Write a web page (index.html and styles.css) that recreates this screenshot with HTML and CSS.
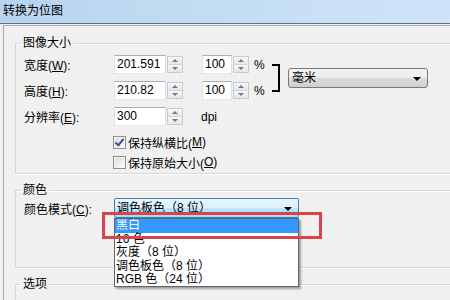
FILE: index.html
```html
<!DOCTYPE html>
<html lang="zh-CN">
<head>
  <meta charset="UTF-8" />
  <title>转换为位图</title>
  <link rel="stylesheet" href="styles.css">
</head>
<body>
  <div class="titlebar">转换为位图</div>

  <div class="panel">
    <fieldset class="group">
      <legend>图像大小</legend>
      <div class="size-grid">
        <div class="label">宽度(<u>W</u>):</div>
        <div class="spin-field">
          <div class="num">201.591</div>
          <div class="spin"><span class="up"></span><span class="down"></span></div>
        </div>
        <div class="spin-field">
          <div class="num pct">100</div>
          <div class="spin"><span class="up"></span><span class="down"></span></div>
        </div>
        <div class="unit">%</div>
        <div class="bracket"></div>
        <div class="select unit-select">毫米<span class="arrow"></span></div>

        <div class="label">高度(<u>H</u>):</div>
        <div class="spin-field">
          <div class="num">210.82</div>
          <div class="spin"><span class="up"></span><span class="down"></span></div>
        </div>
        <div class="spin-field">
          <div class="num pct">100</div>
          <div class="spin"><span class="up"></span><span class="down"></span></div>
        </div>
        <div class="unit">%</div>

        <div class="label">分辨率(<u>E</u>):</div>
        <div class="spin-field">
          <div class="num">300</div>
          <div class="spin"><span class="up"></span><span class="down"></span></div>
        </div>
        <div class="unit dpi">dpi</div>
      </div>

      <div class="checks">
        <div class="check-row"><span class="checkbox checked"></span>保持纵横比(<u>M</u>)</div>
        <div class="check-row"><span class="checkbox"></span>保持原始大小(<u>O</u>)</div>
      </div>
    </fieldset>

    <fieldset class="group color-group">
      <legend>颜色</legend>
      <div class="color-row">
        <div class="label">颜色模式(<u>C</u>):</div>
        <div class="combo">
          <div class="select color-select">调色板色（8 位）<span class="arrow"></span></div>
          <ul class="dropdown">
            <li class="selected">黑白</li>
            <li>16 色</li>
            <li>灰度（8 位）</li>
            <li>调色板色（8 位）</li>
            <li>RGB 色（24 位）</li>
          </ul>
        </div>
      </div>
    </fieldset>

    <fieldset class="group">
      <legend>选项</legend>
      <div class="check-row option-row"><span class="checkbox"></span>光滑处理(<u>A</u>)</div>
    </fieldset>
  </div>

  <div class="highlight"></div>
</body>
</html>
```

FILE: styles.css
```css
body {
  margin: 0;
  width: 450px;
  height: 300px;
  overflow: hidden;
  position: relative;
  background: #f0f0f0;
  color: #000;
  font-family: "Liberation Sans", "Noto Sans CJK SC", sans-serif;
  font-size: 12px;
}
u {
  text-decoration: underline;
  text-underline-offset: 1px;
}
.titlebar {
  height: 23px;
  line-height: 22px;
  padding-left: 3px;
  border-bottom: 1px solid #5f7287;
  background: linear-gradient(90deg, #b7d3ee 0%, #c3dcf3 45%, #cfe4f8 100%);
  font-size: 12px;
}
.panel {
  margin: 1px 0 0 3px;
  width: 520px;
  height: 300px;
  border-top: 1px solid #a9abad;
  border-left: 1px solid #a9abad;
  background: #f0f0f0;
}
.group {
  margin: 8px 0 0 11px;
  padding: 4px 0 1px 8px;
  border: 1px solid #d5d9dc;
  border-right: none;
  box-shadow: 0 1px 0 #fff, inset 0 1px 0 #fff;
  min-width: 0;
}
.group:first-child {
  margin-top: 9px;
}
.group legend {
  margin-left: -3px;
  padding: 0 2px;
  line-height: 16px;
}
.size-grid {
  display: grid;
  grid-template-columns: 90px 88px 51px 19px 16px 140px;
  grid-template-rows: 19px 19px 19px;
  row-gap: 7px;
  align-items: center;
}
.label {
  white-space: nowrap;
}
.spin-field {
  display: flex;
  align-items: center;
}
.num {
  box-sizing: border-box;
  width: 52px;
  height: 19px;
  padding-left: 2px;
  line-height: 17px;
  background: #fff;
  border: 1px solid #abadb3;
  border-color: #abadb3 #dbdfe6 #e3e9ef #e2e3ea;
}
.num.pct {
  width: 30px;
}
.spin {
  box-sizing: border-box;
  width: 16px;
  height: 17px;
  margin-left: 1px;
  border: 1px solid #c9cbce;
  display: flex;
  flex-direction: column;
}
.spin span {
  flex: 1;
  display: flex;
  align-items: center;
  justify-content: center;
  background: linear-gradient(#f8f8f8, #e6e6e6);
}
.spin .up {
  border-bottom: 1px solid #d6d6d6;
}
.spin span::after {
  content: "";
  border-left: 3px solid transparent;
  border-right: 3px solid transparent;
}
.spin .up::after {
  border-bottom: 3px solid #6f7c93;
}
.spin .down::after {
  border-top: 3px solid #6f7c93;
}
.unit {
  padding-left: 1px;
}
.dpi {
  margin-left: -2px;
}
.bracket {
  grid-column: 5;
  grid-row: 1 / span 2;
  box-sizing: border-box;
  width: 8px;
  height: 28px;
  border: 2px solid #000;
  border-left: none;
}
.select {
  position: relative;
  box-sizing: border-box;
  height: 20px;
  line-height: 18px;
  padding-left: 3px;
  border-radius: 3px;
}
.unit-select {
  grid-column: 6;
  grid-row: 1 / span 2;
  width: 140px;
  border: 1px solid #7a7a7a;
  background: linear-gradient(#f3f3f3 0%, #ebebeb 50%, #dddddd 50%, #d0d0d0 100%);
}
.arrow {
  position: absolute;
  right: 6px;
  top: 8px;
  border-left: 4px solid transparent;
  border-right: 4px solid transparent;
  border-top: 4px solid #000;
}
.checks {
  margin-top: 6px;
  padding-left: 89px;
}
.check-row {
  display: flex;
  align-items: center;
  height: 20px;
  white-space: nowrap;
}
.checkbox {
  position: relative;
  box-sizing: border-box;
  width: 13px;
  height: 13px;
  margin-right: 2px;
  border: 1px solid #8e8f8f;
  background: linear-gradient(135deg, #dcdcdc, #fbfbfb);
  box-shadow: inset 0 0 0 1px #f4f4f4;
}
.checkbox.checked::after {
  content: "";
  position: absolute;
  left: 3px;
  top: 0;
  width: 3px;
  height: 7px;
  border: solid #3d5192;
  border-width: 0 2px 2px 0;
  transform: rotate(40deg);
}
.color-group {
  padding-top: 0;
  padding-bottom: 49px;
}
.color-row {
  display: flex;
  align-items: center;
}
.color-row .label {
  width: 90px;
}
.combo {
  position: relative;
}
.color-select {
  width: 185px;
  padding-left: 2px;
  border: 1px solid #3c7fb1;
  border-radius: 2px;
  background: linear-gradient(#eaf6fd 0%, #d9f0fc 50%, #bee6fd 50%, #a7d9f5 100%);
}
.dropdown {
  position: absolute;
  left: 0;
  top: 20px;
  box-sizing: border-box;
  width: 185px;
  height: 69px;
  margin: 0;
  padding: 0;
  list-style: none;
  background: #fff;
  border: 1px solid #646464;
  box-shadow: 2px 2px 2px rgba(0, 0, 0, 0.35);
  overflow: hidden;
}
.dropdown li {
  height: 13.5px;
  line-height: 13.5px;
  padding-left: 1px;
  white-space: nowrap;
}
.dropdown li.selected {
  background: #3399ff;
  color: #fff;
}
.option-row {
  margin-top: 3px;
  padding-left: 0;
}
.highlight {
  position: absolute;
  left: 102px;
  top: 212px;
  box-sizing: border-box;
  width: 220px;
  height: 27px;
  border: 3px solid #d9434a;
}
```
